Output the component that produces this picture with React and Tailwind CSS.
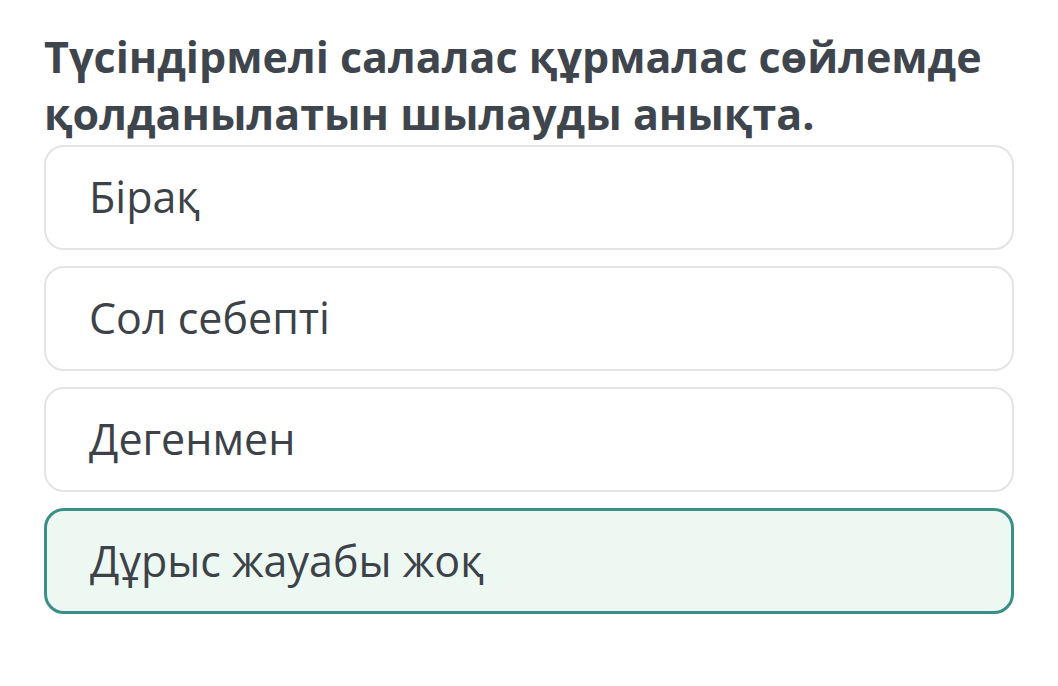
import React from 'react';

const options = [
    { id: 1, label: 'Бірақ' },
    { id: 2, label: 'Сол себепті' },
    { id: 3, label: 'Дегенмен' },
    { id: 4, label: 'Дұрыс жауабы жоқ', selected: true },
];

const App = () => {
    return (
        <div className="w-[1058px] h-[686px] bg-white pl-[44px] pr-[44px] pt-[28px]" style={{ fontFamily: '"Open Sans", sans-serif' }}>
            <h1 className="text-[43px] font-bold leading-[57px] text-[#3f454d]">
                Түсіндірмелі салалас құрмалас сөйлемде қолданылатын шылауды анықта.
            </h1>
            <div className="flex flex-col gap-[16px] mt-[3px]">
                {options.map(opt => (
                    <div
                        key={opt.id}
                        className={`rounded-[20px] flex items-center pl-[43px] text-[43px] text-[#3c4248] ${opt.selected ? 'h-[106px] border-[3px] border-[#3a8f87] bg-[#edf8f3]' : 'h-[105px] border-2 border-[#e2e4e6] bg-white'}`}
                    >
                        {opt.label}
                    </div>
                ))}
            </div>
        </div>
    );
};

export default App;
